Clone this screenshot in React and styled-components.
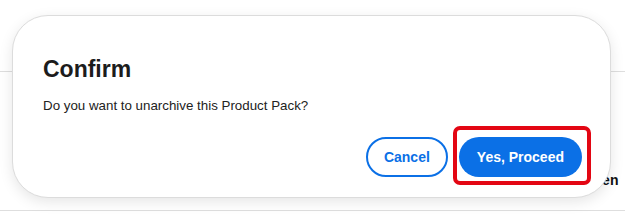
import styled, { createGlobalStyle } from 'styled-components'

const GlobalStyle = createGlobalStyle`
    body {
        margin: 0;
        background: #ffffff;
        font-family: "Liberation Sans", Arial, sans-serif;
    }
`

const Page = styled.div`
    position: relative;
    width: 625px;
    height: 223px;
    overflow: hidden;
    background: #ffffff;
`
const Row = styled.div`
    display: grid;
    grid-template-columns: 1fr 40px;
    align-items: end;
    height: ${props => props.height}px;
    border-bottom: 1px solid #dedede;
`
const Cell = styled.div`
    white-space: nowrap;
    overflow: hidden;
    font-size: 14px;
    font-weight: bold;
    color: #111;
    padding-bottom: ${props => props.bottom || 0}px;
`
const Dialog = styled.div`
    position: absolute;
    left: 12px;
    top: 15px;
    width: 599px;
    box-sizing: border-box;
    display: flex;
    flex-direction: column;
    padding: 39px 28px 20px 30px;
    background: #ffffff;
    border: 1px solid #dcdcdc;
    border-radius: 36px;
    box-shadow: 0 4px 14px rgba(0, 0, 0, 0.1);
`
const Title = styled.h2`
    margin: 0;
    font-size: 23px;
    line-height: 28px;
    font-weight: bold;
    color: #1c1c1c;
`
const Message = styled.p`
    margin: 14px 0 0;
    font-size: 13.33px;
    line-height: 18px;
    color: #222;
`
const Actions = styled.div`
    display: flex;
    justify-content: flex-end;
    gap: 11px;
    margin-top: 22px;
`
const Button = styled.button`
    box-sizing: border-box;
    height: 40px;
    padding: 0 ${props => props.primary ? 18 : 16}px;
    border-radius: 20px;
    border: ${props => props.primary ? 'none' : '2px solid #0b70e6'};
    background: ${props => props.primary ? '#0b70e6' : '#ffffff'};
    color: ${props => props.primary ? '#ffffff' : '#0b70e6'};
    font-family: "Liberation Sans", Arial, sans-serif;
    font-size: 14px;
    font-weight: bold;
    cursor: pointer;
`
const Highlight = styled.span`
    position: relative;
    display: inline-flex;
`
const Marker = styled.span`
    position: absolute;
    top: -11px;
    bottom: -8px;
    left: -6px;
    right: -9px;
    border: 4px solid #e30613;
    border-radius: 7px;
    pointer-events: none;
`

const App = () => {
    return ( <>
        <GlobalStyle />
        <Page>
            <Row height={71}><Cell /></Row>
            <Row height={138}>
                <Cell />
                <Cell bottom={22}>Then</Cell>
            </Row>
            <Dialog>
                <Title>Confirm</Title>
                <Message>Do you want to unarchive this Product Pack?</Message>
                <Actions>
                    <Button>Cancel</Button>
                    <Highlight>
                        <Button primary>Yes, Proceed</Button>
                        <Marker />
                    </Highlight>
                </Actions>
            </Dialog>
        </Page>
    </> );
}

export default App;
